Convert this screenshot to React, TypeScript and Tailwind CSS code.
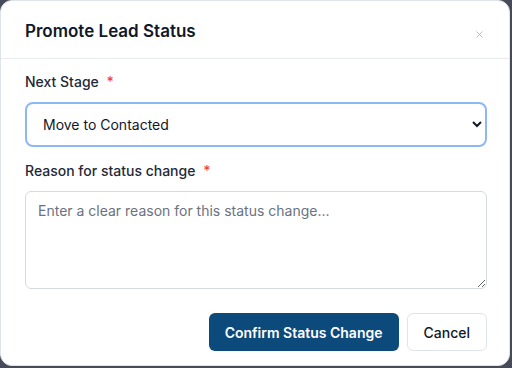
import { X } from "lucide-react";

export default function App() {
  return (
    <div
      className="h-[368px] w-[512px] bg-[#474a57] overflow-hidden"
      style={{ fontFamily: "Inter, 'Noto Sans', sans-serif" }}
    >
      <div className="flex h-[366px] w-[510px] flex-col rounded-xl border border-[#dfe3ea] bg-white">
        <div className="flex h-[58px] items-start justify-between border-b border-[#e8ebef] pl-6 pr-6 pt-[18px]">
          <h2 className="text-[17px] font-semibold leading-6 text-[#111827]">Promote Lead Status</h2>
          <button className="mt-[10px] text-[#9ca3af]">
            <X size={11} strokeWidth={1.5} />
          </button>
        </div>

        <div className="flex flex-col pl-6 pr-[22px] pt-[13px]">
          <label className="text-[14px] font-medium leading-5 text-[#1f2937]">
            Next Stage <span className="ml-1 text-[#ef4444]">*</span>
          </label>
          <select
            defaultValue="contacted"
            className="mt-[10px] h-[45px] w-full rounded-lg border-2 border-[#8db8f2] bg-white pl-3 pr-2 text-[14px] text-[#111827] outline-none"
          >
            <option value="contacted">Move to Contacted</option>
            <option value="qualified">Move to Qualified</option>
          </select>

          <label className="mt-[14px] text-[14px] font-medium leading-5 text-[#1f2937]">
            Reason for status change <span className="ml-1 text-[#ef4444]">*</span>
          </label>
          <textarea
            placeholder="Enter a clear reason for this status change..."
            className="mt-[10px] h-[98px] w-full rounded-md border border-[#d6dbe2] px-3 py-[7px] text-[14px] leading-6 text-[#111827] placeholder:text-[#6b7280] outline-none"
          />

          <div className="mt-[24px] flex justify-end gap-2">
            <button className="h-[38px] rounded-md bg-[#0b4a7b] px-4 text-[14px] font-semibold text-white">
              Confirm Status Change
            </button>
            <button className="h-[38px] rounded-md border border-[#dfe3ea] bg-white px-4 text-[14px] font-medium text-[#111827]">
              Cancel
            </button>
          </div>
        </div>
      </div>
    </div>
  );
}
